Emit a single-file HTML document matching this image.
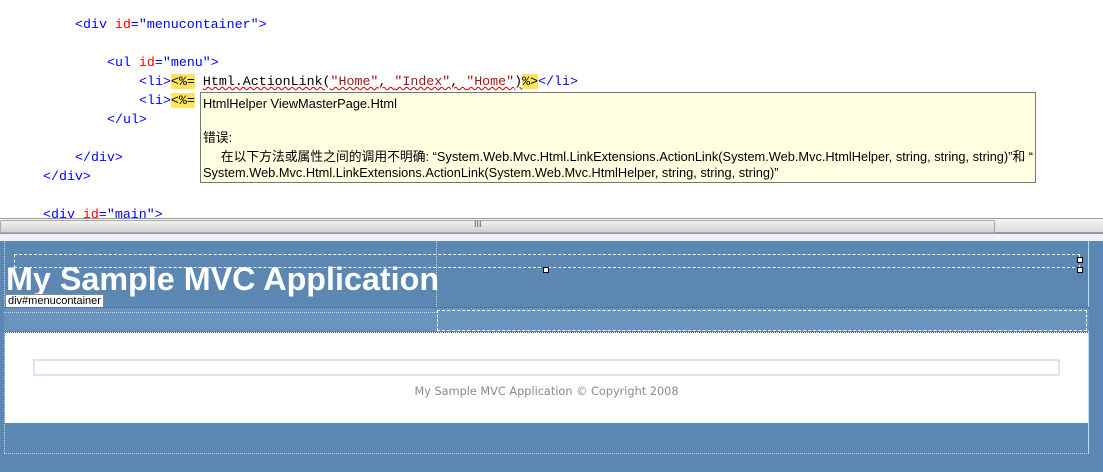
<!DOCTYPE html>
<html><head><meta charset="utf-8"><style>
*{margin:0;padding:0;box-sizing:border-box}
body{width:1103px;height:472px;overflow:hidden;background:#fff;position:relative;font-family:"Liberation Sans","Noto Sans CJK SC",sans-serif}
.code{position:absolute;left:0;top:0;width:1103px;height:218px;overflow:hidden;font-family:"Liberation Mono",monospace;font-size:13.3px;color:#00f}
.ln{position:absolute;white-space:pre;line-height:19px;height:19px}
.r{color:#f00}
.y{background:#ffe45c;color:#000}
.sq{text-decoration:underline wavy #c00;text-decoration-thickness:1px;color:#000}
.s{color:#a31515}
.tip{position:absolute;left:200px;top:92px;width:836px;height:91px;background:#ffffe1;border:1px solid #767676;font-size:12.8px;color:#000}
.tl{position:absolute;left:2px;white-space:nowrap;line-height:16px}
.sb{position:absolute;left:0;top:218px;width:1103px;height:16px;background:linear-gradient(#f4f4f4,#dcdcdc);border-top:1px solid #9a9a9a;border-bottom:2px solid #999}
.thumb{position:absolute;left:0;top:1px;width:995px;height:13px;background:linear-gradient(#f0f0f0,#d2d2d2);border:1px solid #aaa;border-radius:2px}
.blue{position:absolute;left:0;top:241px;width:1103px;height:231px;background:#5b87b2}
.strip{position:absolute;left:0;top:234px;width:1103px;height:7px;background:#eef2f8}
</style></head><body>
<div class="code">
<div class="ln" style="left:75px;top:15px">&lt;div <span class="r">id</span>=<span>"menucontainer"</span>&gt;</div>
<div class="ln" style="left:107px;top:53px">&lt;ul <span class="r">id</span>=<span>"menu"</span>&gt;</div>
<div class="ln" style="left:139px;top:72px">&lt;li&gt;<span class="y">&lt;%=</span> <span class="sq">Html.ActionLink(<span class="s">"Home"</span>, <span class="s">"Index"</span>, <span class="s">"Home"</span>)</span><span class="y">%&gt;</span>&lt;/li&gt;</div>
<div class="ln" style="left:139px;top:91px">&lt;li&gt;<span class="y">&lt;%=</span></div>
<div class="ln" style="left:107px;top:110px">&lt;/ul&gt;</div>
<div class="ln" style="left:75px;top:148px">&lt;/div&gt;</div>
<div class="ln" style="left:43px;top:167px">&lt;/div&gt;</div>
<div class="ln" style="left:43px;top:205px">&lt;div <span class="r">id</span>=<span>"main"</span>&gt;</div>
</div>
<div class="tip">
<div class="tl" style="top:3px">HtmlHelper ViewMasterPage.Html</div>
<div class="tl" style="top:37px">错误:</div>
<div class="tl" style="top:56px">&nbsp;&nbsp;&nbsp;&nbsp;&nbsp;在以下方法或属性之间的调用不明确: “System.Web.Mvc.Html.LinkExtensions.ActionLink(System.Web.Mvc.HtmlHelper, string, string, string)”和 “</div>
<div class="tl" style="top:72px">System.Web.Mvc.Html.LinkExtensions.ActionLink(System.Web.Mvc.HtmlHelper, string, string, string)”</div>
</div>
<div class="sb"><div class="thumb"><span style="position:absolute;left:473px;top:-2px;font-size:9px;color:#555">III</span></div></div>
<div class="strip"></div>
<div class="blue">
<div style="position:absolute;left:4px;top:0;width:1px;height:212px;border-left:1px dotted #c8d6e6"></div>
<div style="position:absolute;left:1088px;top:0;width:1px;height:212px;border-left:1px solid #c8d6e6"></div>
<div style="position:absolute;left:436px;top:0;width:1px;height:90px;border-left:1px dotted #c8d6e6"></div>
<div style="position:absolute;left:14px;top:13px;width:1066px;height:14px;border:1px dashed #fff"></div>
<div style="position:absolute;left:543px;top:26px;width:6px;height:6px;background:#fff;border:1px solid #000"></div>
<div style="position:absolute;left:1077px;top:16px;width:6px;height:6px;background:#fff;border:1px solid #000"></div>
<div style="position:absolute;left:1077px;top:26px;width:6px;height:6px;background:#fff;border:1px solid #000"></div>
<div style="position:absolute;left:6px;top:20px;font-size:32.3px;font-weight:bold;color:#fff;line-height:36px;white-space:nowrap">My Sample MVC Application</div>
<div style="position:absolute;left:5px;top:53px;font-size:11px;background:#fff;border:1px solid #888;padding:0 2px;line-height:12px;color:#000">div#menucontainer</div>
<div style="position:absolute;left:4px;top:66px;width:1085px;height:24px;background:#6a94bd;border-top:1px dotted #2a5a8a"></div>
<div style="position:absolute;left:4px;top:71px;width:433px;border-top:1px dotted #c8d6e6"></div>
<div style="position:absolute;left:437px;top:69px;width:650px;height:21px;border:1px dashed #fff"></div>
<div style="position:absolute;left:5px;top:91px;width:1083px;height:91px;background:#fff;border-top:1px dotted #555"></div>
<div style="position:absolute;left:33px;top:118px;width:1027px;height:17px;border:2px solid #eedcf6"></div>
<div style="position:absolute;left:0;top:144px;width:1093px;text-align:center;font-family:'DejaVu Sans',sans-serif;font-size:11.3px;color:#8a8a8a">My Sample MVC Application © Copyright 2008</div>
<div style="position:absolute;left:4px;top:212px;width:1085px;border-top:1px dotted #c8d6e6"></div>
</div>
</body></html>
